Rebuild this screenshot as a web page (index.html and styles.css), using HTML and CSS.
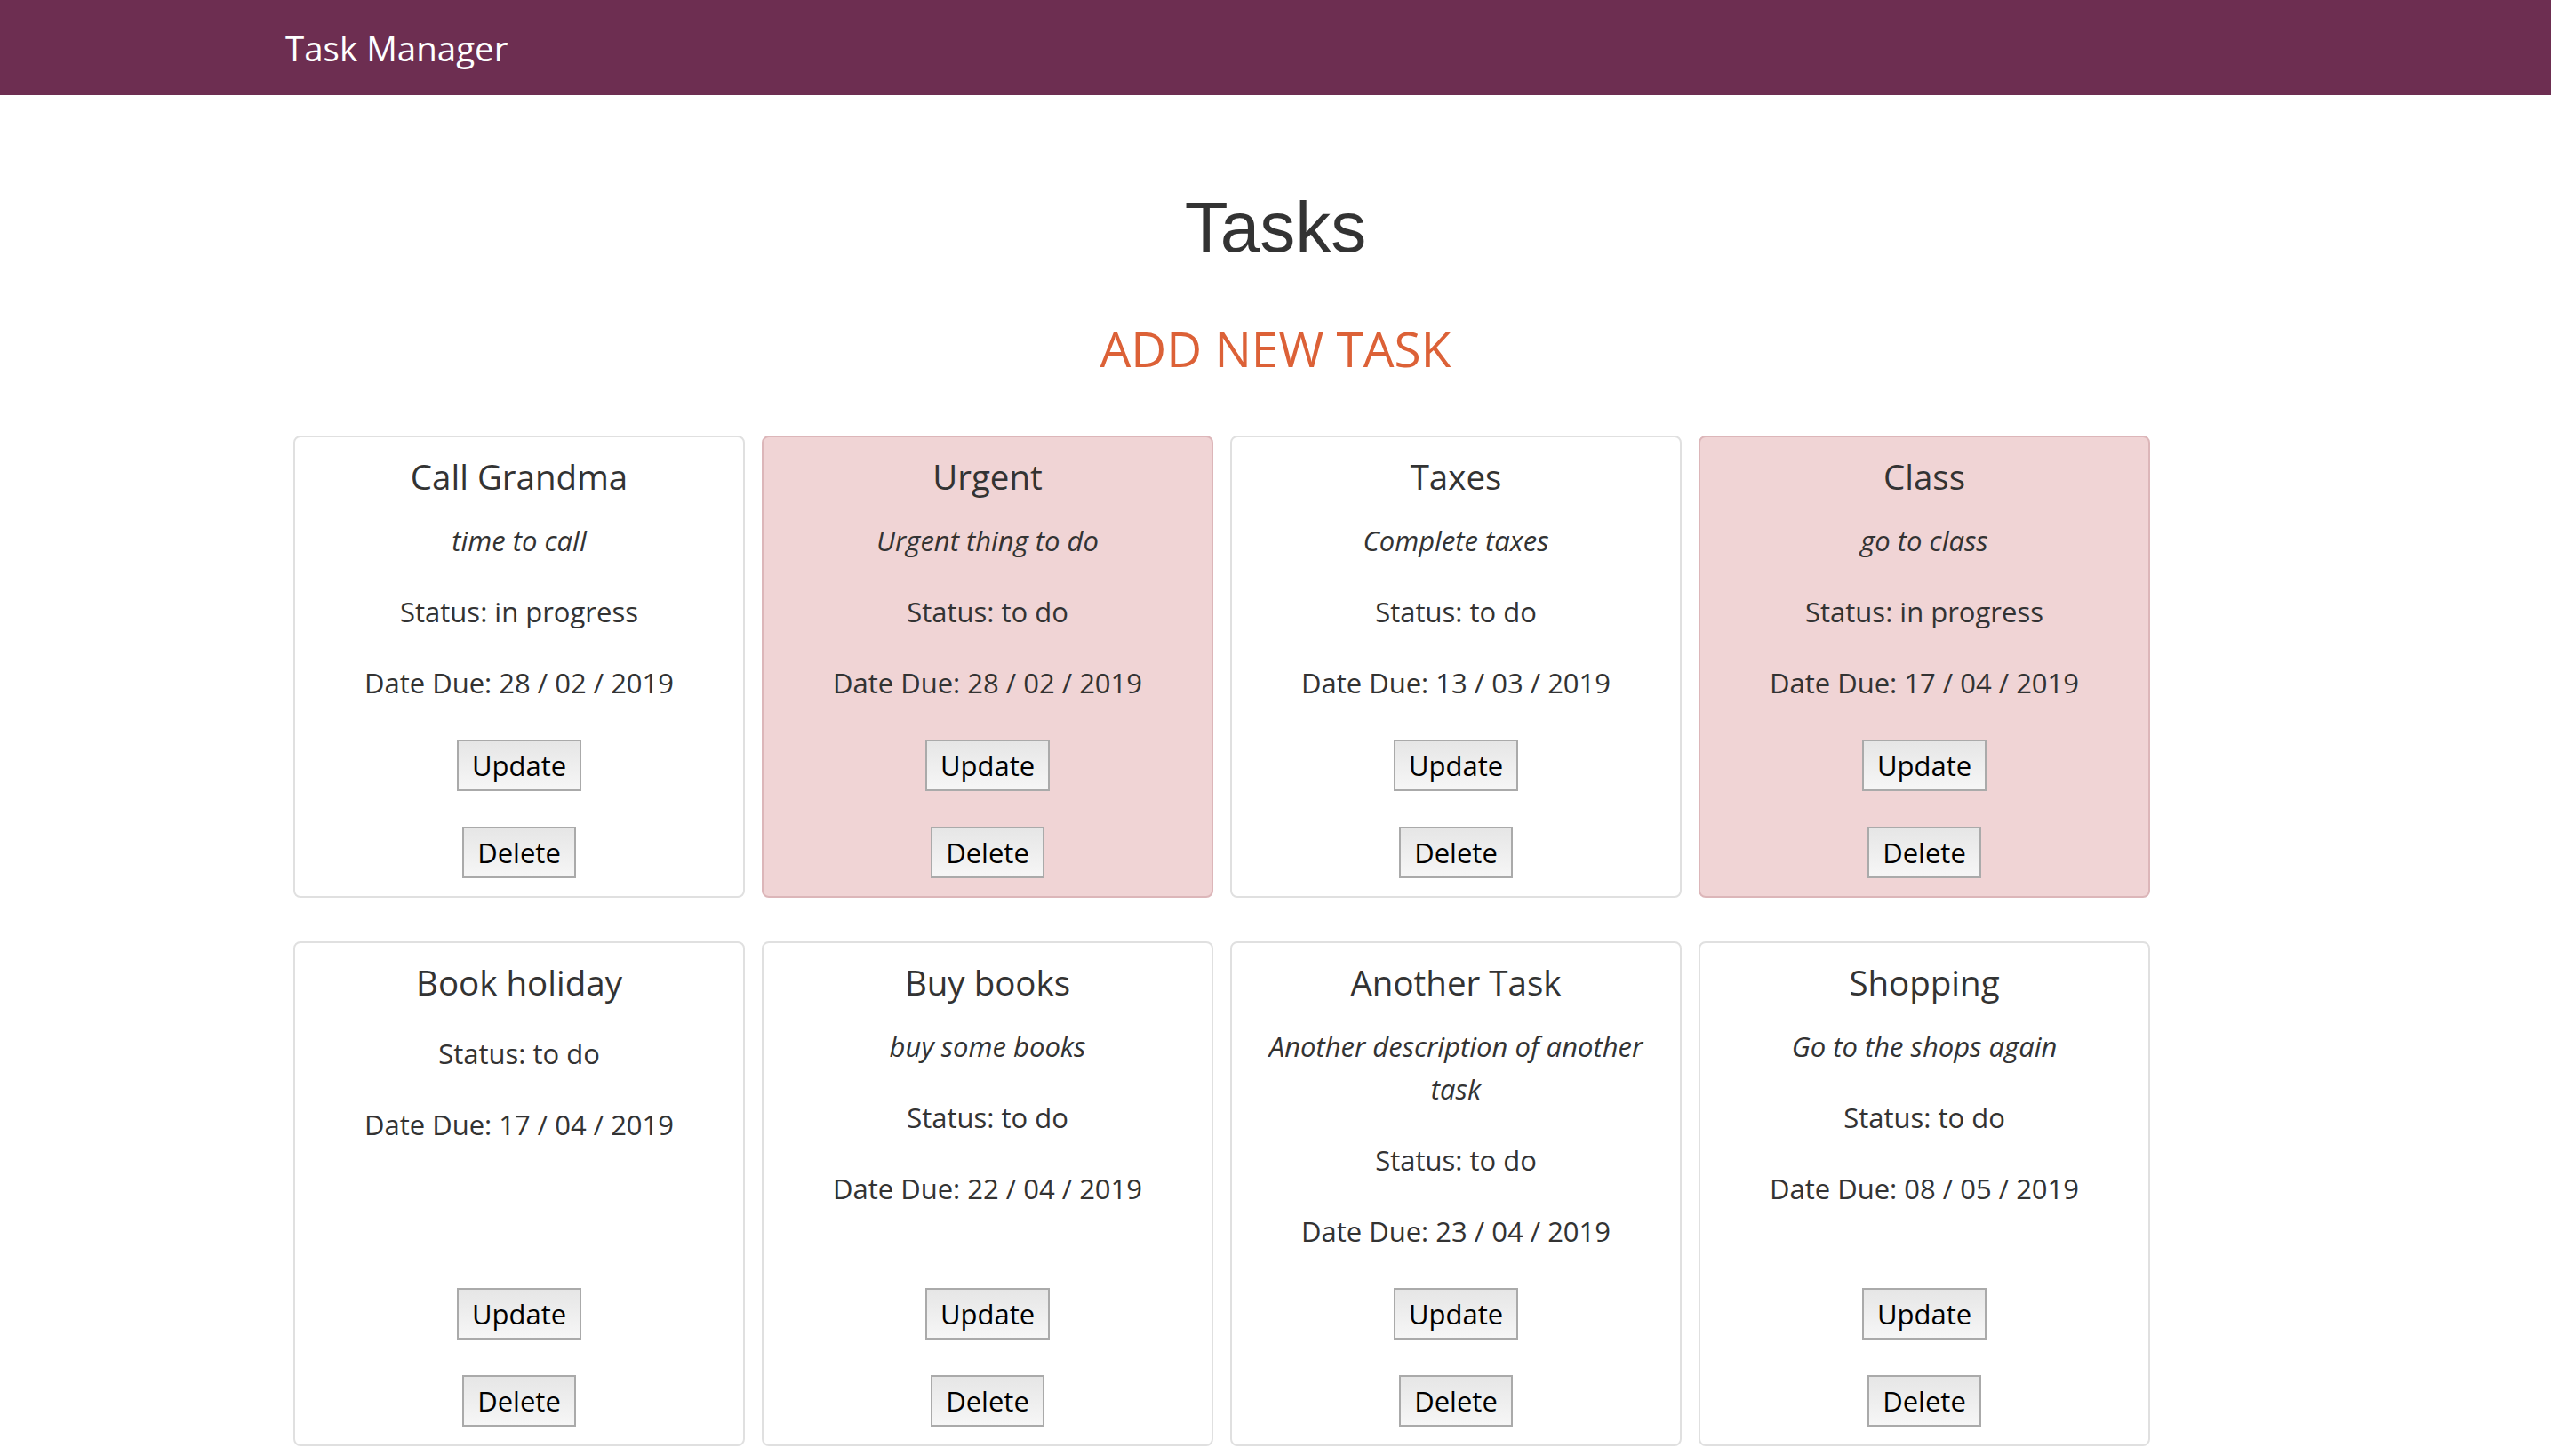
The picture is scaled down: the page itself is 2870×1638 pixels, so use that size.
FILE: index.html
```html
<!DOCTYPE html>
<html lang="en">
<head>
<meta charset="utf-8">
<title>Task Manager</title>
<link rel="stylesheet" href="styles.css">
</head>
<body>
<nav class="navbar">
  <div class="container nav-inner">
    <a class="brand" href="#">Task Manager</a>
  </div>
</nav>
<main class="container">
  <h1 class="page-title">Tasks</h1>
  <h3 class="add-link"><a href="#">ADD NEW TASK</a></h3>
  <div class="cards">
    <div class="card">
      <h5 class="card-title">Call Grandma</h5>
      <p class="desc">time to call</p>
      <p>Status: in progress</p>
      <p>Date Due: 28 / 02 / 2019</p>
      <div class="actions"><button class="btn">Update</button><button class="btn">Delete</button></div>
    </div>
    <div class="card urgent">
      <h5 class="card-title">Urgent</h5>
      <p class="desc">Urgent thing to do</p>
      <p>Status: to do</p>
      <p>Date Due: 28 / 02 / 2019</p>
      <div class="actions"><button class="btn">Update</button><button class="btn">Delete</button></div>
    </div>
    <div class="card">
      <h5 class="card-title">Taxes</h5>
      <p class="desc">Complete taxes</p>
      <p>Status: to do</p>
      <p>Date Due: 13 / 03 / 2019</p>
      <div class="actions"><button class="btn">Update</button><button class="btn">Delete</button></div>
    </div>
    <div class="card urgent">
      <h5 class="card-title">Class</h5>
      <p class="desc">go to class</p>
      <p>Status: in progress</p>
      <p>Date Due: 17 / 04 / 2019</p>
      <div class="actions"><button class="btn">Update</button><button class="btn">Delete</button></div>
    </div>
    <div class="card">
      <h5 class="card-title no-desc">Book holiday</h5>
      <p>Status: to do</p>
      <p>Date Due: 17 / 04 / 2019</p>
      <div class="actions"><button class="btn">Update</button><button class="btn">Delete</button></div>
    </div>
    <div class="card">
      <h5 class="card-title">Buy books</h5>
      <p class="desc">buy some books</p>
      <p>Status: to do</p>
      <p>Date Due: 22 / 04 / 2019</p>
      <div class="actions"><button class="btn">Update</button><button class="btn">Delete</button></div>
    </div>
    <div class="card">
      <h5 class="card-title">Another Task</h5>
      <p class="desc">Another description of another task</p>
      <p>Status: to do</p>
      <p>Date Due: 23 / 04 / 2019</p>
      <div class="actions"><button class="btn">Update</button><button class="btn">Delete</button></div>
    </div>
    <div class="card">
      <h5 class="card-title">Shopping</h5>
      <p class="desc">Go to the shops again</p>
      <p>Status: to do</p>
      <p>Date Due: 08 / 05 / 2019</p>
      <div class="actions"><button class="btn">Update</button><button class="btn">Delete</button></div>
    </div>
  </div>
</main>
</body>
</html>
```

FILE: styles.css
```css
* { box-sizing: border-box; }

body {
  margin: 0;
  font-family: "Open Sans", "Noto Sans", sans-serif;
  font-size: 31px;
  line-height: 48px;
  color: #333333;
  background: #ffffff;
}

.container {
  width: 2220px;
  margin: 0 auto;
}

.navbar {
  background: #6d2e51;
  height: 107px;
  display: flex;
  align-items: center;
}

.nav-inner {
  display: flex;
  align-items: center;
}

.brand {
  color: #ffffff;
  text-decoration: none;
  font-size: 38.5px;
  line-height: 48px;
  margin-left: -4px;
}

.page-title {
  margin: 101px 0 0;
  text-align: center;
  font-family: "Liberation Sans", Arial, sans-serif;
  font-weight: 400;
  font-size: 80px;
  line-height: 96px;
  color: #333333;
}

.add-link {
  margin: 54px 0 0;
  text-align: center;
  font-weight: 400;
  font-size: 55px;
  line-height: 67px;
}

.add-link a {
  color: #dc6137;
  text-decoration: none;
}

.cards {
  margin-top: 65px;
  padding-left: 5px;
  display: flex;
  flex-wrap: wrap;
  column-gap: 19px;
  row-gap: 49px;
}

.card {
  width: 508px;
  border: 2px solid #e0e0e0;
  border-radius: 8px;
  padding: 20px;
  display: flex;
  flex-direction: column;
  align-items: center;
  text-align: center;
  background: #ffffff;
}

.card.urgent {
  background: #f0d4d5;
  border-color: #dcb6b9;
}

.card-title {
  margin: 0 0 24px;
  font-size: 38.5px;
  line-height: 48px;
  font-weight: 400;
  color: #333333;
}

.card-title.no-desc {
  margin-bottom: 32px;
}

.card p {
  margin: 0 0 32px;
}

.card .desc {
  font-style: italic;
}

.actions {
  margin-top: auto;
  padding-top: 8px;
  display: flex;
  flex-direction: column;
  align-items: center;
  gap: 40px;
}

.btn {
  font-family: "Open Sans", "Noto Sans", sans-serif;
  font-size: 31px;
  line-height: 48px;
  height: 58px;
  padding: 3px 15px;
  border: 2px solid #aaaaaa;
  border-radius: 0;
  color: #000000;
  background: linear-gradient(#e6e6e6, #f6f6f6);
}
```
